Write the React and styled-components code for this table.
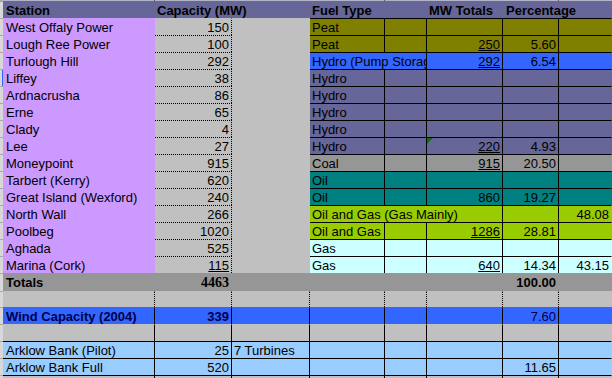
import React from 'react';
import styled, { createGlobalStyle } from 'styled-components';

const Global = createGlobalStyle`
  html, body { margin: 0; padding: 0; background: #c0c0c0; }
  #root { width: 612px; height: 378px; overflow: hidden; }
`;

const C = {
  header: '#666699',
  lav: '#cc99ff',
  gray: '#c0c0c0',
  dark: '#969696',
  olive: '#808000',
  blue: '#3366ff',
  slate: '#666699',
  teal: '#008080',
  lime: '#99cc00',
  ice: '#ccffff',
  sky: '#99ccff',
};

const Sheet = styled.div`
  width: 612px;
  height: 378px;
  overflow: hidden;
  display: flex;
  flex-direction: column;
  background: #c0c0c0;
  font-family: "Liberation Sans", Arial, sans-serif;
  font-size: 13px;
  color: #000;
`;

const Row = styled.div`
  display: grid;
  grid-template-columns: 3px 152px 77px 78px 75px 42px 76px 56px 53px;
  height: ${(p) => p.$h}px;
  flex: none;
  background: ${(p) => p.$bg || 'transparent'};
  color: ${(p) => p.$ink || 'inherit'};
`;

const edge = (style, color = '#000') =>
  style ? `1px ${style} ${color}` : '1px solid transparent';

const Cell = styled.div`
  position: relative;
  box-sizing: border-box;
  min-width: 0;
  height: 100%;
  grid-column: span ${(p) => p.$span || 1};
  padding: 0 2px 0 ${(p) => (p.$pl != null ? p.$pl : 2)}px;
  line-height: 17px;
  white-space: nowrap;
  overflow: hidden;
  text-align: ${(p) => p.$align || 'left'};
  font-weight: ${(p) => (p.$bold ? 700 : 400)};
  font-family: ${(p) =>
    p.$serif ? '"Liberation Serif", "Times New Roman", serif' : 'inherit'};
  font-size: ${(p) => (p.$serif ? '14px' : 'inherit')};
  background: ${(p) => p.$bg || 'transparent'};
  border-top: ${(p) => edge(p.$t)};
  border-right: ${(p) => edge(p.$r)};
`;

const Strip = styled.div`
  box-sizing: border-box;
  height: 100%;
  background: #d8d8d8;
  border-top: 1px solid #a8a8a8;
  box-shadow: ${(p) => (p.$mark ? 'inset -1px 0 0 #3366ff' : 'none')};
`;

const U = styled.span`
  text-decoration: underline;
  text-underline-offset: 1px;
`;

const Flag = styled.span`
  position: absolute;
  left: 0;
  top: 0;
  width: 0;
  height: 0;
  border-top: 6px solid #107010;
  border-right: 6px solid transparent;
`;

const upper = [
  { s: 'West Offaly Power', c: '150', f: 'Peat', bg: C.olive },
  { s: 'Lough Ree Power', c: '100', f: 'Peat', mw: '250', mwU: true, p: '5.60', bg: C.olive },
  { s: 'Turlough Hill', c: '292', f: 'Hydro (Pump Storage)', fs: 2, mw: '292', mwU: true, p: '6.54', bg: C.blue },
  { s: 'Liffey', c: '38', f: 'Hydro', bg: C.slate, mark: true },
  { s: 'Ardnacrusha', c: '86', f: 'Hydro', bg: C.slate },
  { s: 'Erne', c: '65', f: 'Hydro', bg: C.slate },
  { s: 'Clady', c: '4', f: 'Hydro', bg: C.slate },
  { s: 'Lee', c: '27', f: 'Hydro', mw: '220', mwU: true, p: '4.93', bg: C.slate, flag: true },
  { s: 'Moneypoint', c: '915', f: 'Coal', mw: '915', mwU: true, p: '20.50', bg: C.dark },
  { s: 'Tarbert (Kerry)', c: '620', f: 'Oil', bg: C.teal },
  { s: 'Great Island (Wexford)', c: '240', f: 'Oil', mw: '860', p: '19.27', bg: C.teal },
  { s: 'North Wall', c: '266', f: 'Oil and Gas (Gas Mainly)', fs: 3, x: '48.08', bg: C.lime },
  { s: 'Poolbeg', c: '1020', f: 'Oil and Gas', mw: '1286', mwU: true, p: '28.81', bg: C.lime },
  { s: 'Aghada', c: '525', f: 'Gas', bg: C.ice },
  { s: 'Marina (Cork)', c: '115', cU: true, f: 'Gas', mw: '640', mwU: true, p: '14.34', x: '43.15', bg: C.ice },
];

function DataRow({ r, first }) {
  const fs = r.fs || 1;
  return (
    <Row $h={17} $bg={r.bg}>
      <Strip $mark={r.mark} />
      <Cell $bg={C.lav} $pl={3}>{r.s}</Cell>
      <Cell $bg={C.gray} $align="right" $t={first ? null : 'dotted'} $r="dotted">
        {r.cU ? <U>{r.c}</U> : r.c}
      </Cell>
      <Cell $bg={C.gray} />
      <Cell $span={fs} $t="solid" $r="solid">{r.f}</Cell>
      {fs < 2 && <Cell $t="solid" $r="solid" />}
      {fs < 3 && (
        <Cell $align="right" $t="solid" $r="solid">
          {r.flag && <Flag />}
          {r.mw && (r.mwU ? <U>{r.mw}</U> : r.mw)}
        </Cell>
      )}
      <Cell $align="right" $t="solid" $r="solid">{r.p}</Cell>
      <Cell $align="right" $t="solid">{r.x}</Cell>
    </Row>
  );
}

function GridRow({ h, bg, ink, v, t, children }) {
  const [station, cap, note, pct, bold] = children;
  return (
    <Row $h={h} $bg={bg} $ink={ink}>
      <Strip />
      <Cell $pl={3} $bold={bold} $t={t} $r={v}>{station}</Cell>
      <Cell $align="right" $bold={bold} $t={t} $r={v}>{cap}</Cell>
      <Cell $t={t} $r={v}>{note}</Cell>
      <Cell $t={t} $r={v} />
      <Cell $t={t} $r={v} />
      <Cell $t={t} $r={v} />
      <Cell $align="right" $t={t} $r={v}>{pct}</Cell>
      <Cell $t={t} />
    </Row>
  );
}

export default function App() {
  return (
    <>
      <Global />
      <Sheet>
        <Row $h={1} $bg="#b4b4c8">
          <Strip />
          <Cell $r="solid" />
          <Cell />
          <Cell />
          <Cell $r="solid" />
          <Cell />
          <Cell />
          <Cell $r="solid" />
          <Cell />
        </Row>
        <Row $h={17} $bg={C.header}>
          <Strip />
          <Cell $bold $pl={3}>Station</Cell>
          <Cell $bold $span={2}>Capacity (MW)</Cell>
          <Cell $bold $span={2}>Fuel Type</Cell>
          <Cell $bold>MW Totals</Cell>
          <Cell $bold $span={2} $pl={3}>Percentage</Cell>
        </Row>
        {upper.map((r, i) => (
          <DataRow key={r.s} r={r} first={i === 0} />
        ))}
        <Row $h={18} $bg={C.dark}>
          <Strip />
          <Cell $bold $pl={3}>Totals</Cell>
          <Cell $bold $serif $align="right">4463</Cell>
          <Cell />
          <Cell />
          <Cell />
          <Cell />
          <Cell $bold $align="right">100.00</Cell>
          <Cell />
        </Row>
        <GridRow h={16} bg={C.gray} v="dotted">
          {''}{''}{''}{''}{false}
        </GridRow>
        <GridRow h={17} bg={C.blue} ink="#000046" v="solid">
          {'Wind Capacity (2004)'}{'339'}{''}{'7.60'}{true}
        </GridRow>
        <GridRow h={17} bg={C.gray} v="solid">
          {''}{''}{''}{''}{false}
        </GridRow>
        <GridRow h={17} bg={C.sky} v="solid" t="solid">
          {'Arklow Bank (Pilot)'}{'25'}{'7 Turbines'}{''}{false}
        </GridRow>
        <GridRow h={17} bg={C.sky} v="solid" t="solid">
          {'Arklow Bank Full'}{'520'}{''}{'11.65'}{false}
        </GridRow>
        <GridRow h={3} bg={C.gray} v="solid" t="solid">
          {''}{''}{''}{''}{false}
        </GridRow>
      </Sheet>
    </>
  );
}
